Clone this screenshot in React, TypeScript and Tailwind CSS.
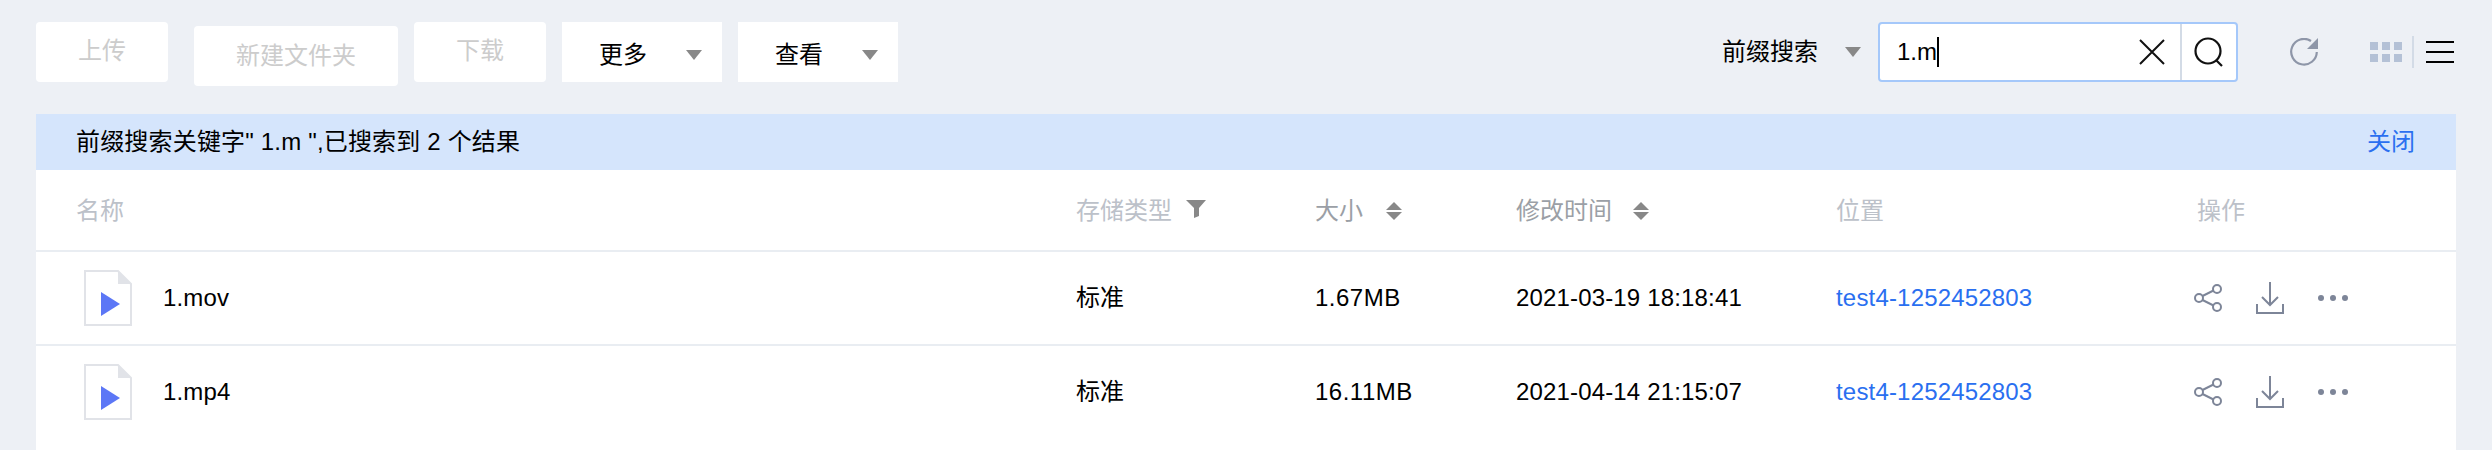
import React from 'react';

const FONT = "font-['Liberation_Sans','Noto_Sans_CJK_SC',sans-serif]";

interface FileRow {
  name: string;
  storage: string;
  size: string;
  modified: string;
  bucket: string;
}

const FILES: FileRow[] = [
  { name: '1.mov', storage: '标准', size: '1.67MB', modified: '2021-03-19 18:18:41', bucket: 'test4-1252452803' },
  { name: '1.mp4', storage: '标准', size: '16.11MB', modified: '2021-04-14 21:15:07', bucket: 'test4-1252452803' },
];

function Caret() {
  return <div className="w-0 h-0 border-x-[8px] border-x-transparent border-t-[10px] border-t-[#888888]" />;
}

function SortIcon() {
  return (
    <svg width="16" height="18" viewBox="0 0 16 18" fill="#888888">
      <path d="M8 0l8 8H0zM8 18l8-8H0z" />
    </svg>
  );
}

function FilterIcon() {
  return (
    <svg width="20" height="18" viewBox="0 0 20 18" fill="#888888">
      <path d="M0 0h20l-7 8v8l-5 2V8z" />
    </svg>
  );
}

function FileIcon() {
  return (
    <svg width="48" height="56" viewBox="0 0 48 56">
      <path d="M1 1h33l13 13v41H1z" fill="#ffffff" stroke="#e1e3e8" strokeWidth="2" />
      <path d="M34 1l13 13H34z" fill="#e1e3e8" />
      <path d="M17 22l19 12-19 12z" fill="#5c77f6" />
    </svg>
  );
}

function ShareIcon() {
  return (
    <svg width="28" height="28" viewBox="0 0 28 28" fill="none" stroke="#7d8598" strokeWidth="2">
      <circle cx="23" cy="5" r="4" />
      <circle cx="23" cy="23" r="4" />
      <circle cx="5" cy="14" r="4" />
      <path d="M8.5 12l11-5.5M8.5 16l11 5.5" />
    </svg>
  );
}

function DownloadIcon() {
  return (
    <svg width="28" height="32" viewBox="0 0 28 32" fill="none" stroke="#7d8598" strokeWidth="2">
      <path d="M14 0v23M6 15l8 8 8-8" />
      <path d="M1 22v9h26v-9" />
    </svg>
  );
}

function MoreIcon() {
  return (
    <svg width="30" height="6" viewBox="0 0 30 6" fill="#7d8598">
      <circle cx="3" cy="3" r="3" />
      <circle cx="15" cy="3" r="3" />
      <circle cx="27" cy="3" r="3" />
    </svg>
  );
}

function RefreshIcon() {
  return (
    <svg width="28" height="28" viewBox="0 0 28 28" fill="none">
      <path d="M21 3A12.8 12.8 0 1 0 26.8 14" stroke="#8e96a8" strokeWidth="2.2" />
      <path d="M28 0v11H17z" fill="#8e96a8" />
    </svg>
  );
}

export default function App() {
  return (
    <div className={`${FONT} w-[2492px] h-[450px] overflow-hidden bg-[#edf0f5] text-[24px] text-[#000000] pl-9 pr-[36px]`}>
      {/* toolbar */}
      <div className="flex items-start pt-[22px] h-[114px]">
        <button className="w-[132px] h-[60px] bg-white rounded text-[#cccccc] pb-[3px]">上传</button>
        <button className="w-[204px] h-[60px] bg-white rounded text-[#cccccc] mt-1 ml-[26px]">新建文件夹</button>
        <button className="w-[132px] h-[60px] bg-white rounded text-[#cccccc] ml-4 pb-[3px]">下载</button>
        <div className="w-[160px] h-[60px] bg-white ml-4 pl-[37px] pr-5 flex items-center justify-between pt-[6px]">
          <span>更多</span>
          <Caret />
        </div>
        <div className="w-[160px] h-[60px] bg-white ml-4 pl-[37px] pr-5 flex items-center justify-between pt-[6px]">
          <span>查看</span>
          <Caret />
        </div>

        <div className="ml-auto mr-[2px] flex items-center h-[60px]">
          <span>前缀搜索</span>
          <div className="ml-[27px] mr-[17px]">
            <Caret />
          </div>
          <div className="w-[360px] h-[60px] bg-white border-2 border-[#a5c8fa] rounded flex items-center">
            <div className="flex-1 flex items-center pl-[17px]">
              <span>1.m</span>
              <div className="w-[2px] h-[30px] bg-black" />
            </div>
            <svg width="26" height="26" viewBox="0 0 26 26" fill="none" stroke="#111111" strokeWidth="2" className="mr-[15px]">
              <path d="M1 1l24 24M25 1L1 25" />
            </svg>
            <div className="w-[56px] h-full border-l-2 border-[#d3dbe6] flex items-center justify-center">
              <svg width="30" height="30" viewBox="0 0 30 30" fill="none" stroke="#111111" strokeWidth="2.2">
                <circle cx="14" cy="14" r="12.5" />
                <path d="M22 23l6 6" />
              </svg>
            </div>
          </div>
          <div className="ml-[52px]">
            <RefreshIcon />
          </div>
          <div className="ml-[52px] grid grid-cols-3 gap-[4px]">
            {[0, 1, 2, 3, 4, 5].map(i => (
              <div key={i} className="w-[8px] h-[8px] bg-[#b4c1d6]" />
            ))}
          </div>
          <div className="w-[2px] h-[32px] bg-[#d3dbe6] ml-[10px]" />
          <div className="ml-[12px] w-[28px] h-[22px] flex flex-col justify-between">
            <div className="h-[2px] bg-black" />
            <div className="h-[2px] bg-black" />
            <div className="h-[2px] bg-black" />
          </div>
        </div>
      </div>

      {/* search result banner */}
      <div className="h-[56px] bg-[#d5e5fc] pl-10 pr-[41px] flex items-center justify-between">
        <span className="tracking-[0.18px]">前缀搜索关键字" 1.m ",已搜索到 2 个结果</span>
        <a className="text-[#2a6ff0]">关闭</a>
      </div>

      {/* file table */}
      <div className="bg-white h-[280px]">
        <div className="h-[82px] pl-10 pt-[3px] pb-[2px] border-b-2 border-[#e9edf2] grid grid-cols-[1000px_239px_201px_320px_361px_1fr] items-center text-[#bcc1c9]">
          <div>名称</div>
          <div className="flex items-start gap-[14px]">
            <span>存储类型</span>
            <div className="mt-[7px]">
              <FilterIcon />
            </div>
          </div>
          <div className="flex items-center gap-[23px] text-[#9b9fa6]">
            <span>大小</span>
            <SortIcon />
          </div>
          <div className="flex items-center gap-[21px] text-[#9b9fa6]">
            <span>修改时间</span>
            <SortIcon />
          </div>
          <div>位置</div>
          <div>操作</div>
        </div>
        {FILES.map((file, i) => (
          <div
            key={file.name}
            className={`h-[94px] pl-10 border-b-2 grid grid-cols-[1000px_239px_201px_320px_358px_1fr] items-center ${i === 0 ? 'border-[#e9edf2]' : 'border-transparent'}`}
          >
            <div className="flex items-center pl-2">
              <FileIcon />
              <span className="ml-[31px] tracking-[0.16px]">{file.name}</span>
            </div>
            <div>{file.storage}</div>
            <div className="tracking-[0.5px]">{file.size}</div>
            <div className="tracking-[0.16px]">{file.modified}</div>
            <a className="text-[#2a6ff0] tracking-[0.18px]">{file.bucket}</a>
            <div className="flex items-center">
              <ShareIcon />
              <div className="ml-[34px]">
                <DownloadIcon />
              </div>
              <div className="ml-[34px]">
                <MoreIcon />
              </div>
            </div>
          </div>
        ))}
      </div>
    </div>
  );
}
